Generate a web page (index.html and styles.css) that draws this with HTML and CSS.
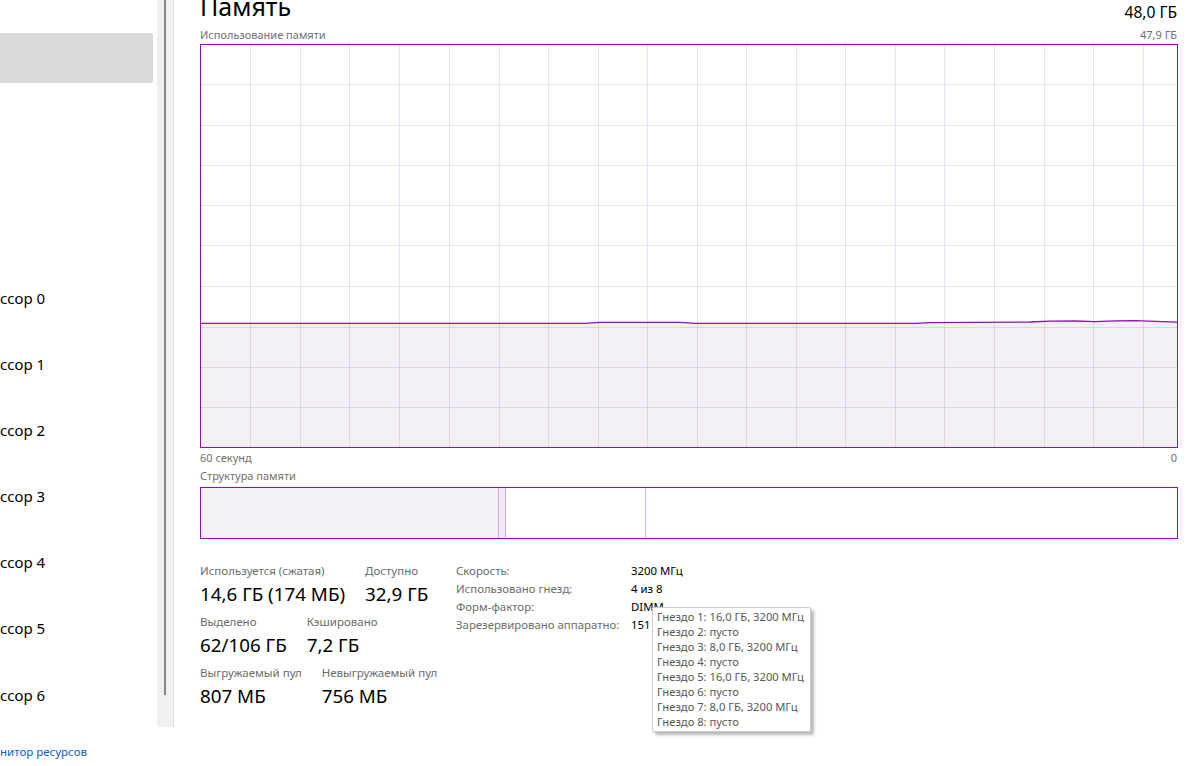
FILE: index.html
```html
<!DOCTYPE html>
<html lang="ru">
<head>
<meta charset="utf-8">
<title>Диспетчер задач — Память</title>
<link rel="stylesheet" href="styles.css">
</head>
<body>
  <aside class="sidebar">
    <div class="nav-selected"></div>
    <ul class="nav-list">
      <li class="nav-item">ссор 0</li>
      <li class="nav-item">ссор 1</li>
      <li class="nav-item">ссор 2</li>
      <li class="nav-item">ссор 3</li>
      <li class="nav-item">ссор 4</li>
      <li class="nav-item">ссор 5</li>
      <li class="nav-item">ссор 6</li>
    </ul>
    <a class="res-link" href="#">нитор ресурсов</a>
  </aside>

  <div class="scrollbar"><div class="scroll-thumb"></div></div>

  <main class="pane">
    <header class="pane-head">
      <h1 class="pane-title">Память</h1>
      <div class="pane-total">48,0 ГБ</div>
    </header>

    <div class="caption-row">
      <span>Использование памяти</span>
      <span>47,9 ГБ</span>
    </div>

    <svg class="usage-graph" width="978" height="404" viewBox="0 0 978 404">
      <!-- used memory area -->
      <path class="usage-fill" d="M0.5 279.3 L385 279.3 L400 278.4 L480 278.4 L495 279.3 L715 279.3 L730 278.6 L830 278 L850 277.2 L875 277 L895 277.6 L915 276.8 L935 276.6 L955 277.4 L977.5 278.2 L977.5 403.5 L0.5 403.5 Z"/>
      <g class="grid">
        <line x1="50.5" y1="1" x2="50.5" y2="403"/>
        <line x1="100.5" y1="1" x2="100.5" y2="403"/>
        <line x1="149.5" y1="1" x2="149.5" y2="403"/>
        <line x1="199.5" y1="1" x2="199.5" y2="403"/>
        <line x1="249.5" y1="1" x2="249.5" y2="403"/>
        <line x1="299.5" y1="1" x2="299.5" y2="403"/>
        <line x1="348.5" y1="1" x2="348.5" y2="403"/>
        <line x1="398.5" y1="1" x2="398.5" y2="403"/>
        <line x1="447.5" y1="1" x2="447.5" y2="403"/>
        <line x1="497.5" y1="1" x2="497.5" y2="403"/>
        <line x1="546.5" y1="1" x2="546.5" y2="403"/>
        <line x1="596.5" y1="1" x2="596.5" y2="403"/>
        <line x1="645.5" y1="1" x2="645.5" y2="403"/>
        <line x1="695.5" y1="1" x2="695.5" y2="403"/>
        <line x1="744.5" y1="1" x2="744.5" y2="403"/>
        <line x1="794.5" y1="1" x2="794.5" y2="403"/>
        <line x1="844.5" y1="1" x2="844.5" y2="403"/>
        <line x1="893.5" y1="1" x2="893.5" y2="403"/>
        <line x1="943.5" y1="1" x2="943.5" y2="403"/>
        <line x1="1" y1="40.5" x2="977" y2="40.5"/>
        <line x1="1" y1="81.5" x2="977" y2="81.5"/>
        <line x1="1" y1="121.5" x2="977" y2="121.5"/>
        <line x1="1" y1="161.5" x2="977" y2="161.5"/>
        <line x1="1" y1="201.5" x2="977" y2="201.5"/>
        <line x1="1" y1="242.5" x2="977" y2="242.5"/>
        <line x1="1" y1="283.5" x2="977" y2="283.5"/>
        <line x1="1" y1="323.5" x2="977" y2="323.5"/>
        <line x1="1" y1="363.5" x2="977" y2="363.5"/>
      </g>
      <path class="usage-line" d="M0.5 279.3 L385 279.3 L400 278.4 L480 278.4 L495 279.3 L715 279.3 L730 278.6 L830 278 L850 277.2 L875 277 L895 277.6 L915 276.8 L935 276.6 L955 277.4 L977.5 278.2"/>
      <rect class="frame" x="0.5" y="0.5" width="977" height="403"/>
    </svg>

    <div class="axis-row">
      <span>60 секунд</span>
      <span>0</span>
    </div>

    <div class="caption-row composition-caption">
      <span>Структура памяти</span>
    </div>

    <div class="composition">
      <div class="seg seg-inuse"></div>
      <div class="seg seg-modified"></div>
      <div class="seg seg-standby"></div>
      <div class="seg seg-free"></div>
    </div>

    <section class="stats">
      <div class="stats-main">
        <div class="stat-row">
          <div class="stat">
            <div class="stat-label">Используется (сжатая)</div>
            <div class="stat-value">14,6 ГБ (174 МБ)</div>
          </div>
          <div class="stat">
            <div class="stat-label">Доступно</div>
            <div class="stat-value">32,9 ГБ</div>
          </div>
        </div>
        <div class="stat-row">
          <div class="stat">
            <div class="stat-label">Выделено</div>
            <div class="stat-value">62/106 ГБ</div>
          </div>
          <div class="stat">
            <div class="stat-label">Кэшировано</div>
            <div class="stat-value">7,2 ГБ</div>
          </div>
        </div>
        <div class="stat-row">
          <div class="stat">
            <div class="stat-label">Выгружаемый пул</div>
            <div class="stat-value">807 МБ</div>
          </div>
          <div class="stat">
            <div class="stat-label">Невыгружаемый пул</div>
            <div class="stat-value">756 МБ</div>
          </div>
        </div>
      </div>

      <dl class="specs">
        <dt>Скорость:</dt><dd>3200 МГц</dd>
        <dt>Использовано гнезд:</dt><dd>4 из 8</dd>
        <dt>Форм-фактор:</dt><dd>DIMM</dd>
        <dt>Зарезервировано аппаратно:</dt><dd>151 МБ</dd>
      </dl>
    </section>

    <div class="tooltip">
      <div>Гнездо 1: 16,0 ГБ, 3200 МГц</div>
      <div>Гнездо 2: пусто</div>
      <div>Гнездо 3: 8,0 ГБ, 3200 МГц</div>
      <div>Гнездо 4: пусто</div>
      <div>Гнездо 5: 16,0 ГБ, 3200 МГц</div>
      <div>Гнездо 6: пусто</div>
      <div>Гнездо 7: 8,0 ГБ, 3200 МГц</div>
      <div>Гнездо 8: пусто</div>
    </div>
  </main>
</body>
</html>
```

FILE: styles.css
```css
* {
  box-sizing: border-box;
}

html, body {
  margin: 0;
  padding: 0;
}

body {
  width: 1190px;
  height: 766px;
  overflow: hidden;
  background: #ffffff;
  display: flex;
  align-items: flex-start;
  font-family: "Noto Sans", "Open Sans", sans-serif;
  color: #000;
}

/* ---------- left navigation column ---------- */
.sidebar {
  width: 157px;
  flex: none;
  display: flex;
  flex-direction: column;
  overflow: hidden;
}

.nav-selected {
  margin-top: 33px;
  width: 153px;
  height: 50px;
  background: #d9d9d9;
  border-radius: 0 2px 2px 0;
}

.nav-list {
  list-style: none;
  margin: 182px 0 0 0;
  padding: 0;
}

.nav-item {
  height: 66.1px;
  line-height: 66px;
  font-size: 15px;
  white-space: nowrap;
}

.res-link {
  margin-top: 16px;
  font-size: 11.5px;
  line-height: 16px;
  color: #0a63c9;
  text-decoration: none;
  white-space: nowrap;
}

/* ---------- vertical scrollbar ---------- */
.scrollbar {
  width: 17px;
  height: 727px;
  flex: none;
  background: #f0f0f0;
  border-right: 1px solid #dedede;
  padding-left: 7px;
}

.scroll-thumb {
  width: 2px;
  height: 695px;
  background: #858585;
}

/* ---------- memory pane ---------- */
.pane {
  position: relative;
  margin-left: 26px;
  width: 978px;
  flex: none;
  display: flex;
  flex-direction: column;
}

.pane-head {
  height: 29px;
  display: flex;
  justify-content: space-between;
  align-items: flex-start;
}

.pane-title {
  margin: -7px 0 0 0;
  font-size: 25px;
  line-height: 26px;
  font-weight: 400;
}

.pane-total {
  margin-top: 2px;
  padding-right: 1px;
  font-size: 15.6px;
  line-height: 20px;
}

.caption-row {
  height: 15px;
  display: flex;
  justify-content: space-between;
  font-size: 11px;
  line-height: 12px;
  color: #707070;
  padding-right: 1px;
}

.usage-graph {
  display: block;
}

.usage-fill {
  fill: #f3f1f5;
}

.grid line {
  stroke: rgba(139, 18, 174, 0.14);
  stroke-width: 1;
}

.usage-line {
  fill: none;
  stroke: #8b12ae;
  stroke-width: 1.3;
}

.frame {
  fill: none;
  stroke: #8b12ae;
  stroke-width: 1;
}

.axis-row {
  height: 20px;
  display: flex;
  justify-content: space-between;
  font-size: 11px;
  line-height: 20px;
  color: #707070;
  padding-right: 1px;
}

.composition-caption {
  height: 19px;
  line-height: 16px;
}

.composition {
  height: 52px;
  border: 1px solid #8b12ae;
  display: flex;
}

.seg {
  height: 100%;
}

.seg-inuse {
  width: 298px;
  background: #f3f1f5;
  border-right: 1px solid #d2aedf;
}

.seg-modified {
  width: 7px;
  background: #f1e8f4;
  border-right: 1px solid #d2aedf;
}

.seg-standby {
  width: 140px;
  border-right: 1px solid #d2aedf;
}

.seg-free {
  flex: 1;
}

/* ---------- figures below the charts ---------- */
.stats {
  margin-top: 24px;
  display: flex;
  align-items: flex-start;
}

.stats-main {
  width: 256px;
  flex: none;
  display: flex;
  flex-direction: column;
  gap: 5px;
}

.stat-row {
  display: flex;
  gap: 20px;
}

.stat {
  display: flex;
  flex-direction: column;
  white-space: nowrap;
}

.stat-label {
  font-size: 11.5px;
  line-height: 16px;
  color: #6b6b6b;
}

.stat-value {
  font-size: 18.8px;
  line-height: 30px;
}

.specs {
  margin: -1px 0 0 0;
  display: grid;
  grid-template-columns: 175px auto;
  align-content: start;
  font-size: 11.4px;
  line-height: 18px;
  white-space: nowrap;
}

.specs dt {
  color: #6b6b6b;
}

.specs dd {
  margin: 0;
}

/* slot breakdown popup */
.tooltip {
  position: absolute;
  left: 452px;
  top: 607px;
  width: 159px;
  padding: 1px 4px 2px 4px;
  background: #ffffff;
  border: 1px solid #cccccc;
  border-radius: 2px;
  box-shadow: 3px 3px 3px rgba(0, 0, 0, 0.28);
  font-size: 11.2px;
  line-height: 15px;
  color: #575757;
  white-space: nowrap;
}
```
